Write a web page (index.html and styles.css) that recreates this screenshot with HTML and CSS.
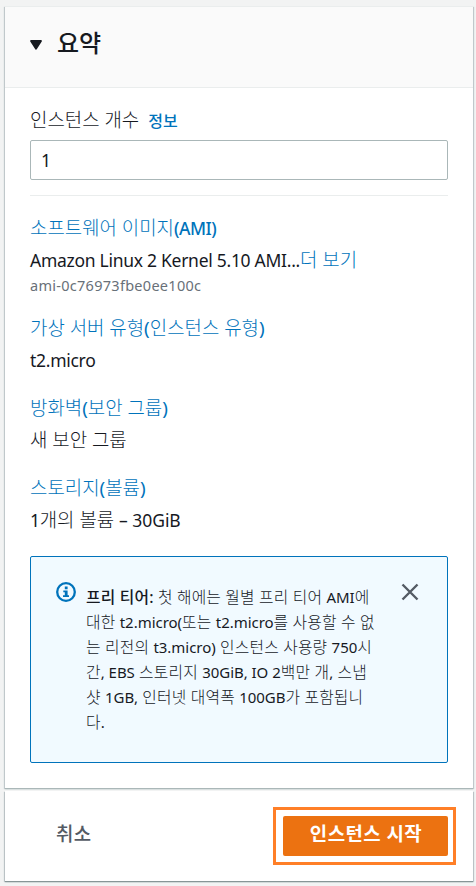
FILE: index.html
```html
<!DOCTYPE html>
<html lang="ko">
<head>
<meta charset="utf-8">
<title>요약</title>
<link rel="stylesheet" href="styles.css">
</head>
<body>
<main class="panel">
  <header class="panel-header">
    <svg class="caret" width="14" height="12" viewBox="0 0 14 12"><path d="M2 2h10L7 9.8z" fill="#16191f" stroke="#16191f" stroke-width="1.8" stroke-linejoin="round"/></svg>
    <h2 class="title">요약</h2>
  </header>
  <div class="panel-body">
    <div class="field-label"><label for="count">인스턴스 개수</label><a class="info-link">정보</a></div>
    <input id="count" class="field-input" type="text" value="1">
    <hr class="divider">
    <dl class="summary">
      <div class="item item-ami">
        <dt>소프트웨어 이미지<span class="en-bold">(AMI)</span></dt>
        <dd><span class="en">Amazon Linux 2 Kernel 5.10 AMI...</span><a class="more">더 보기</a></dd>
        <dd class="ami-id">ami-0c76973fbe0ee100c</dd>
      </div>
      <div class="item">
        <dt>가상 서버 유형<span class="paren">(</span>인스턴스 유형<span class="paren">)</span></dt>
        <dd><span class="en">t2.micro</span></dd>
      </div>
      <div class="item">
        <dt>방화벽<span class="paren">(</span>보안 그룹<span class="paren">)</span></dt>
        <dd>새 보안 그룹</dd>
      </div>
      <div class="item">
        <dt>스토리지<span class="paren">(</span>볼륨<span class="paren">)</span></dt>
        <dd><span class="en">1</span>개의 볼륨 <span class="en size">– 30GiB</span></dd>
      </div>
    </dl>
    <section class="alert">
      <svg class="info-icon" width="20" height="20" viewBox="0 0 20 20"><circle cx="10" cy="10" r="8.8" fill="none" stroke="#0073bb" stroke-width="2.3"/><path d="M8.8 4.5h2.8v2.8H8.8zM7.3 8.5h4.3v4.7H13v1.8H7v-1.8h1.8v-2.9H7.3z" fill="#0073bb"/></svg>
      <p class="alert-text">
        <span class="line"><b>프리 티어:</b> 첫 해에는 월별 프리 티어 <span class="en">AMI</span>에</span>
        <span class="line">대한 <span class="en">t2.micro(</span>또는 <span class="en">t2.micro</span>를 사용할 수 없</span>
        <span class="line">는 리전의 <span class="en">t3.micro)</span> 인스턴스 사용량 <span class="en">750</span>시</span>
        <span class="line">간<span class="en">, EBS</span> 스토리지 <span class="en">30GiB, IO 2</span>백만 개<span class="en">,</span> 스냅</span>
        <span class="line">샷 <span class="en">1GB,</span> 인터넷 대역폭 <span class="en">100GB</span>가 포함됩니</span>
        <span class="line">다<span class="en">.</span></span>
      </p>
      <svg class="close-icon" width="18" height="18" viewBox="0 0 18 18"><path d="M1.5 1.5l15 15M16.5 1.5l-15 15" stroke="#545b64" stroke-width="2.4"/></svg>
    </section>
  </div>
</main>
<footer class="actions">
  <button class="cancel">취소</button>
  <div class="highlight"><button class="launch">인스턴스 시작</button></div>
</footer>
</body>
</html>
```
FILE: styles.css
```css
* { box-sizing: border-box; }
body {
  margin: 0;
  padding: 6px 3px 0 5px;
  height: 886px;
  overflow: hidden;
  background: #f2f3f3;
  color: #16191f;
  font: 300 18.9px/24px "Noto Sans", "Noto Sans CJK KR", sans-serif;
}
h2, p, dl, dt, dd { margin: 0; }
button, input { font: inherit; }
.panel, .actions {
  background: #fff;
  box-shadow: 0 1px 1px #aab7b8, 1px 1px 1px #c5cccf, -1px 1px 1px #c5cccf;
}
.panel { height: 782px; border-top: 1px solid #eaeded; }
.panel-header {
  height: 81px;
  padding: 0 0 8px 24px;
  display: flex;
  align-items: center;
  background: #fafafa;
  border-bottom: 1px solid #eaeded;
}
.caret { margin: 4px 14px 0 0; }
.title { padding-bottom: 2px; font: 500 24px/30px "Noto Sans CJK KR", sans-serif; }
.panel-body { padding: 20px 25px 0; }
.field-label { height: 32px; display: flex; align-items: baseline; }
.info-link { margin-left: 9px; color: #0073bb; font-weight: 500; font-size: 16px; }
.field-input {
  display: block;
  width: 100%;
  height: 40px;
  padding: 0 0 1px 10px;
  border: 1px solid #aab7b8;
  border-radius: 2px;
  background: #fff;
  color: #16191f;
  font-size: 17.5px;
  font-weight: 400;
}
.divider { height: 1px; margin: 15px 0 16px; border: 0; background: #eaeded; }
.item { height: 80px; line-height: 32px; }
.item-ami { height: 100px; }
dt, .more { color: #0073bb; }
dt, dd { height: 32px; white-space: nowrap; }
.en { font-size: 17.5px; font-weight: 400; letter-spacing: -0.28px; }
.en-bold { font-size: 17.5px; font-weight: 500; letter-spacing: -0.5px; }
.size { letter-spacing: -0.05px; }
.paren { font-weight: 400; }
.ami-id { height: 20px; line-height: 18px; font-size: 14.5px; font-weight: 400; letter-spacing: 0.28px; color: #687078; }
.alert {
  display: flex;
  align-items: flex-start;
  height: 207px;
  margin-top: 4px;
  padding: 25px 28px 0 25px;
  border: 1px solid #0073bb;
  border-radius: 2px;
  background: #f1faff;
}
.info-icon { flex: none; }
.alert-text { flex: 1; margin: 3px 0 0 10px; font-size: 15.8px; line-height: 25px; letter-spacing: 0.18px; }
.alert-text b { font-weight: 500; }
.alert-text .en { font-size: 15px; letter-spacing: -0.03px; }
.line { display: block; white-space: nowrap; }
.close-icon { flex: none; margin-top: 1px; }
.actions {
  display: flex;
  align-items: center;
  justify-content: space-between;
  height: 90px;
  margin-top: 3px;
  padding: 0 17px 0 51px;
  box-shadow: 0 1px 1px #879596, 1px 1px 1px #c5cccf, -1px 1px 1px #c5cccf;
}
.cancel { padding: 0 0 4px; border: 0; background: none; color: #545b64; font-weight: 500; letter-spacing: 0.3px; }
.highlight { width: 183px; height: 58px; padding: 6px 5px 6px 7px; border: 3px solid #ff7f27; }
.launch {
  width: 165px;
  height: 40px;
  padding: 0 0 4px 1px;
  border: 0;
  border-radius: 2px;
  background: #ec7211;
  color: #fff;
  font-weight: 700;
  letter-spacing: 0.45px;
}
```
